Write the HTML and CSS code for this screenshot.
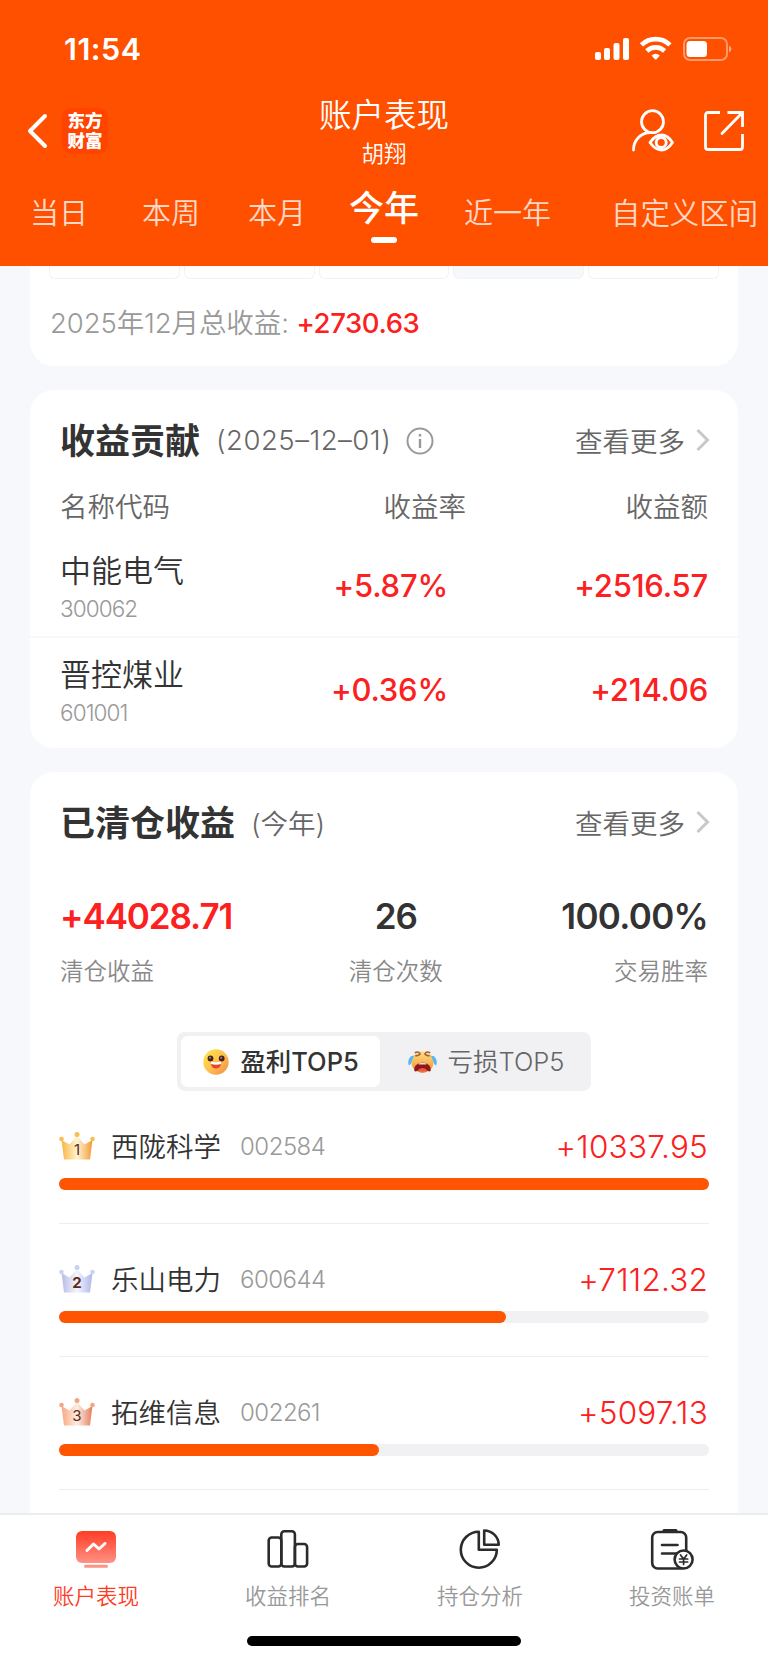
FILE: index.html
```html
<!DOCTYPE html>
<html lang="zh-CN">
<head>
  <meta charset="UTF-8">
  <title>账户表现</title>
  <link rel="stylesheet" href="styles.css">
</head>
<body>
  <header class="header">
    <div class="status-bar">
      <span class="time">11:54</span>
      <svg class="status-icons" width="138" height="26" viewBox="0 0 138 26">
        <g fill="#fff">
          <rect x="0" y="16" width="6" height="8" rx="2"/>
          <rect x="9" y="12" width="6" height="12" rx="2"/>
          <rect x="18.500" y="7" width="6" height="17" rx="2"/>
          <rect x="28" y="2" width="6" height="22" rx="2"/>
          <path d="M56.500 19.500l3.200 3.500a1.300 1.300 0 0 0 2 0l3.200-3.500q-4.200-3.600-8.400 0z"/>
        </g>
        <g fill="none" stroke="#fff" stroke-width="4.600">
          <path d="M46.400 8.900a20.500 20.500 0 0 1 28.600 0"/>
          <path d="M51.800 15a12.800 12.800 0 0 1 17.800 0"/>
        </g>
        <rect x="89" y="2" width="43" height="22" rx="6" fill="none" stroke="#fff" stroke-width="2" opacity=".42"/>
        <rect x="91.500" y="5" width="20.500" height="16" rx="3.500" fill="#fff"/>
        <path d="M134 9.500q5 3.500 0 7z" fill="#fff" opacity=".5"/>
      </svg>
    </div>
    <div class="nav">
      <div class="nav-left">
        <svg width="22" height="36" viewBox="0 0 22 36" fill="none" stroke="#fff" stroke-width="4" stroke-linecap="round" stroke-linejoin="round">
          <path d="M18 3L3 18l15 15"/>
        </svg>
        <div class="logo">东方<br>财富</div>
      </div>
      <div class="nav-title">
        <h1>账户表现</h1>
        <p>胡翔</p>
      </div>
      <div class="nav-right">
        <svg width="44" height="44" viewBox="0 0 44 44" fill="none" stroke="#fff" stroke-width="2.800" stroke-linecap="round">
          <circle cx="20.500" cy="12.700" r="11"/>
          <path d="M1.500 41c0-9.500 7-17.500 17-17.500"/>
          <path d="M18 33.500c7-10 16-10 22.500 0c-6.500 10-15.500 10-22.500 0z" stroke-linejoin="round"/>
          <circle cx="29.200" cy="33.500" r="5"/>
        </svg>
        <svg width="42" height="42" viewBox="0 0 42 42" fill="none" stroke="#fff" stroke-width="2.800">
          <path d="M17 2.500H5A2.500 2.500 0 0 0 2.500 5v32A2.500 2.500 0 0 0 5 39.500h32a2.500 2.500 0 0 0 2.500-2.500V24"/>
          <path d="M24.500 2.500h15v14.500"/>
          <path d="M39 3L19 23.500" stroke-linecap="round"/>
        </svg>
      </div>
    </div>
    <nav class="tabs">
      <span class="tab">当日</span>
      <span class="tab">本周</span>
      <span class="tab">本月</span>
      <span class="tab active">今年</span>
      <span class="tab">近一年</span>
      <span class="tab">自定义区间</span>
    </nav>
  </header>

  <main class="content">
    <section class="card month-card">
      <div class="cells">
        <i></i><i></i><i></i><i class="filled"></i><i></i>
      </div>
      <p class="month-total">2025年12月总收益: <b>+2730.63</b></p>
    </section>

    <section class="card contrib-card">
      <div class="card-head">
        <h2>收益贡献</h2>
        <span class="sub date">(2025–12–01)</span>
        <svg class="info" width="28" height="28" viewBox="0 0 28 28" fill="none" stroke="#999" stroke-width="2">
          <circle cx="14" cy="14" r="12.500"/>
          <path d="M14 12v9M14 7v2.500" stroke-width="2.400"/>
        </svg>
        <a class="more">查看更多
          <svg width="14" height="24" viewBox="0 0 14 24" fill="none" stroke="#c8c8c8" stroke-width="3"><path d="M1.500 2L11.500 12l-10 10"/></svg>
        </a>
      </div>
      <div class="row table-head">
        <span>名称代码</span><span class="rate">收益率</span><span>收益额</span>
      </div>
      <div class="row stock">
        <div><h3>中能电气</h3><p>300062</p></div>
        <span class="rate">+5.87%</span>
        <span>+2516.57</span>
      </div>
      <div class="row stock">
        <div><h3>晋控煤业</h3><p>601001</p></div>
        <span class="rate">+0.36%</span>
        <span>+214.06</span>
      </div>
    </section>

    <section class="card closed-card">
      <div class="card-head">
        <h2>已清仓收益</h2>
        <span class="sub">(今年)</span>
        <a class="more">查看更多
          <svg width="14" height="24" viewBox="0 0 14 24" fill="none" stroke="#c8c8c8" stroke-width="3"><path d="M1.500 2L11.500 12l-10 10"/></svg>
        </a>
      </div>
      <div class="stats">
        <div class="stat"><b class="red">+44028.71</b><span>清仓收益</span></div>
        <div class="stat count"><b>26</b><span>清仓次数</span></div>
        <div class="stat"><b>100.00%</b><span>交易胜率</span></div>
      </div>
      <div class="segment">
        <div class="seg on">
          <svg width="26" height="26" viewBox="0 0 26 26">
            <defs>
              <linearGradient id="face" x1="0" y1="0" x2="1" y2="1"><stop offset="0" stop-color="#ffe94a"/><stop offset=".5" stop-color="#ffc34d"/><stop offset="1" stop-color="#f08a4a"/></linearGradient>
            </defs>
            <circle cx="13" cy="13" r="12.700" fill="url(#face)"/>
            <circle cx="7.500" cy="9.500" r="2.900" fill="#4a2418"/><circle cx="18.700" cy="9.500" r="2.900" fill="#4a2418"/>
            <circle cx="7" cy="8.700" r="1" fill="#8d8ac0"/><circle cx="18.200" cy="8.700" r="1" fill="#8d8ac0"/>
            <path d="M8 12.500q5 1.500 10 0q.500 7-5 7t-5-7z" fill="#e8452f"/>
            <path d="M8 12.500q5 1.500 10 0v2.500q-5 1.600-10 0z" fill="#fff"/>
          </svg>
          <span>盈利TOP5</span>
        </div>
        <div class="seg">
          <svg width="29" height="26" viewBox="0 0 30 26">
            <defs>
              <linearGradient id="cry" x1="0" y1="0" x2="0" y2="1"><stop offset="0" stop-color="#ffdf85"/><stop offset=".6" stop-color="#f7b050"/><stop offset="1" stop-color="#e8702c"/></linearGradient>
            </defs>
            <ellipse cx="15" cy="13" rx="11.500" ry="11" fill="url(#cry)"/>
            <path d="M7 3.500q4-2 5.500 1q-1 2-5 2M23 3.500q-4-2-5.500 1q1 2 5 2" fill="none" stroke="#a0603a" stroke-width="1.600"/>
            <path d="M6.500 6.500Q2.500 6 1 10q-1.500 4 0 6.500q2.500-1 3-4.500q.500-3 2.500-5.500zM23.500 6.500q4-.500 5.500 3.500q1.500 4 0 6.500q-2.500-1-3-4.500q-.500-3-2.500-5.500z" fill="#57b4f5"/>
            <path d="M6.500 22c-1-11 18-11 17 0q-1.500 1.500-3 0q-5.500-2-11 0q-1.500 1.500-3 0z" fill="#8c1818"/>
            <path d="M11 14.500q4-1.200 8 0v1h-8z" fill="#f3d9d0"/>
            <path d="M10 21.500q5-4.500 10 0q-5 1.500-10 0z" fill="#ef5148"/>
          </svg>
          <span>亏损TOP5</span>
        </div>
      </div>

      <div class="rank">
        <div class="rank-line">
          <div class="crown gold">
            <svg width="36" height="28" viewBox="0 0 36 28">
              <defs><linearGradient id="gold"><stop offset="0" stop-color="#f9b53e"/><stop offset=".5" stop-color="#fff4d2"/><stop offset="1" stop-color="#f39a35"/></linearGradient></defs>
              <path d="M2.500 8l8 4.500L18 4l7.500 8.500 8-4.500L31 27.500H5z" fill="url(#gold)"/>
              <g fill="#f9bd52"><circle cx="2.500" cy="7" r="2.300"/><circle cx="18" cy="2.500" r="2.500"/><circle cx="33.500" cy="7" r="2.300"/></g>
            </svg>
            <em>1</em>
          </div>
          <h3>西陇科学</h3><span class="code">002584</span><span class="profit">+10337.95</span>
        </div>
        <div class="bar"><div class="fill" style="width:100%"></div></div>
      </div>
      <div class="rank">
        <div class="rank-line">
          <div class="crown silver">
            <svg width="36" height="28" viewBox="0 0 36 28">
              <defs><linearGradient id="silver"><stop offset="0" stop-color="#b7bde4"/><stop offset=".5" stop-color="#f4f5fc"/><stop offset="1" stop-color="#aeb7ea"/></linearGradient></defs>
              <path d="M2.500 8l8 4.500L18 4l7.500 8.500 8-4.500L31 27.500H5z" fill="url(#silver)"/>
              <g fill="#ccd1f1"><circle cx="2.500" cy="7" r="2.300"/><circle cx="18" cy="2.500" r="2.500"/><circle cx="33.500" cy="7" r="2.300"/></g>
            </svg>
            <em>2</em>
          </div>
          <h3>乐山电力</h3><span class="code">600644</span><span class="profit">+7112.32</span>
        </div>
        <div class="bar"><div class="fill" style="width:68.8%"></div></div>
      </div>
      <div class="rank">
        <div class="rank-line">
          <div class="crown bronze">
            <svg width="36" height="28" viewBox="0 0 36 28">
              <defs><linearGradient id="bronze"><stop offset="0" stop-color="#f8a77c"/><stop offset=".5" stop-color="#fdeee5"/><stop offset="1" stop-color="#e67e5c"/></linearGradient></defs>
              <path d="M2.500 8l8 4.500L18 4l7.500 8.500 8-4.500L31 27.500H5z" fill="url(#bronze)"/>
              <g fill="#f3a584"><circle cx="2.500" cy="7" r="2.300"/><circle cx="18" cy="2.500" r="2.500"/><circle cx="33.500" cy="7" r="2.300"/></g>
            </svg>
            <em>3</em>
          </div>
          <h3>拓维信息</h3><span class="code">002261</span><span class="profit">+5097.13</span>
        </div>
        <div class="bar"><div class="fill" style="width:49.3%"></div></div>
      </div>
    </section>
  </main>

  <footer class="tabbar">
    <div class="tabbar-items">
      <div class="item active">
        <svg width="44" height="44" viewBox="0 0 44 44">
          <defs><linearGradient id="screen" x1="0" y1="0" x2="0" y2="1"><stop offset="0" stop-color="#ff3b24"/><stop offset="1" stop-color="#ff9285"/></linearGradient></defs>
          <rect x="2" y="3" width="40" height="32" rx="6" fill="url(#screen)"/>
          <path d="M13 22.500l6.500-6.500 5.500 5 6-5.500" fill="none" stroke="#fff" stroke-width="3" stroke-linecap="round" stroke-linejoin="round"/>
          <rect x="10" y="36.700" width="24" height="3" rx="1.500" fill="#ff9285"/>
        </svg>
        <span>账户表现</span>
      </div>
      <div class="item">
        <svg width="44" height="44" viewBox="0 0 44 44" fill="none" stroke="#2b2b2b" stroke-width="2.600">
          <rect x="2.700" y="9.500" width="12.600" height="29" rx="3"/>
          <rect x="15.300" y="3.300" width="13.600" height="35.200" rx="3"/>
          <rect x="28.900" y="16" width="12.200" height="22.500" rx="3"/>
        </svg>
        <span>收益排名</span>
      </div>
      <div class="item">
        <svg width="44" height="44" viewBox="0 0 44 44" fill="none" stroke="#2b2b2b" stroke-width="2.600" stroke-linejoin="round">
          <path d="M20.800 3.700A18 18 0 1 0 38.800 21.700H20.800z"/>
          <path d="M26.200 2.500a14.500 14.500 0 0 1 14.500 14.300H26.200z"/>
        </svg>
        <span>持仓分析</span>
      </div>
      <div class="item">
        <svg width="44" height="44" viewBox="0 0 44 44" fill="none" stroke="#2b2b2b" stroke-width="2.600" stroke-linecap="round">
          <rect x="2.200" y="4" width="34" height="36.500" rx="5.500"/>
          <path d="M14 2.500h12" stroke-width="3"/>
          <path d="M12 17h15.500M12 25.500h15"/>
          <circle cx="33.600" cy="31.500" r="9" fill="#fff"/>
          <path d="M30.500 27l3.100 4 3.100-4M33.600 31v5.500M29.500 31h8.200M29.500 34h8.200" stroke-width="1.700"/>
        </svg>
        <span>投资账单</span>
      </div>
    </div>
    <div class="home-indicator"></div>
  </footer>
</body>
</html>
```
FILE: styles.css
```css
* {
  box-sizing: border-box;
  margin: 0;
  padding: 0;
}

body {
  width: 768px;
  height: 1663px;
  display: flex;
  flex-direction: column;
  overflow: hidden;
  background: #f6f8fb;
  color: #333;
  font-family: Inter, "Noto Sans CJK SC", sans-serif;
  font-weight: 350;
}

svg {
  display: block;
  flex: none;
}

.red {
  color: #fc2020;
}

/* header */
.header {
  height: 266px;
  flex: none;
  background: #ff5000;
  color: #fff;
}

.status-bar {
  height: 88px;
  padding: 10px 35px 0 64px;
  display: flex;
  justify-content: space-between;
  align-items: center;
}

.time {
  font-size: 30.5px;
  font-weight: 600;
  letter-spacing: .5px;
  padding-bottom: 2px;
}

.nav {
  height: 84px;
  padding-top: 2px;
  display: grid;
  grid-template-columns: 1fr 200px 1fr;
  align-items: center;
}

.nav-left {
  display: flex;
  align-items: center;
  gap: 13px;
  padding-left: 27px;
}

.logo {
  width: 46px;
  height: 46px;
  border-radius: 9px;
  background: #ff4400;
  font-size: 17.5px;
  font-weight: 900;
  line-height: 19.5px;
  padding-top: 3px;
  text-align: center;
}

.nav-title {
  text-align: center;
}

.nav-title h1 {
  font-size: 32.5px;
  line-height: 46px;
  font-weight: 350;
}

.nav-title p {
  font-size: 22.5px;
  line-height: 30px;
}

.nav-right {
  display: flex;
  align-items: center;
  justify-content: flex-end;
  gap: 27px;
  padding-right: 23px;
}

.tabs {
  height: 78px;
  display: flex;
  align-items: center;
  white-space: nowrap;
  padding-left: 30px;
}

.tab {
  font-size: 29px;
  color: rgba(255, 255, 255, .78);
  margin-right: 54px;
}

.tab:nth-child(2) {
  margin-right: 48px;
}

.tab:nth-child(3) {
  margin-right: 43px;
}

.tab.active {
  font-size: 35px;
  line-height: 50px;
  font-weight: 500;
  color: #fff;
  margin-right: 45px;
  display: flex;
  flex-direction: column;
  align-items: center;
  padding-top: 4px;
}

.tab.active::after {
  content: '';
  width: 26px;
  height: 6px;
  border-radius: 3px;
  background: #fff;
  margin-top: 4px;
}

.tab:nth-child(5) {
  margin-right: 60px;
}

.tab:last-child {
  font-size: 29.4px;
  margin-right: 0;
}

/* cards */
.content {
  flex: 1;
  min-height: 0;
  overflow: hidden;
  padding: 0 30px;
}

.card {
  background: #fff;
  border-radius: 24px;
  margin-bottom: 24px;
}

.month-card {
  height: 100px;
  border-radius: 0 0 24px 24px;
  padding: 0 19px;
}

.cells {
  display: grid;
  grid-template-columns: repeat(5, 1fr);
  gap: 4px;
}

.cells i {
  height: 13px;
  border: 1px solid #f2f3f5;
  border-top: 0;
  border-radius: 0 0 6px 6px;
}

.cells .filled {
  background: #f6f8fb;
}

.month-total {
  font-size: 27.5px;
  line-height: 40px;
  margin-top: 24px;
  padding-left: 1px;
  color: #999;
  letter-spacing: -.1px;
}

.month-total b {
  color: #fc2020;
  font-weight: 500;
  letter-spacing: -.4px;
}

.contrib-card {
  height: 358px;
}

.card-head {
  height: 102px;
  padding: 0 28px 0 30px;
  display: flex;
  align-items: center;
}

.card-head h2 {
  font-size: 35px;
  font-weight: 600;
  padding-bottom: 5px;
}

.sub {
  font-size: 27.5px;
  color: #666;
  margin-left: 16px;
  padding-bottom: 2px;
}

.date {
  letter-spacing: .5px;
}

.info {
  margin-left: 15px;
}

.more {
  margin-left: auto;
  padding-bottom: 2px;
  display: flex;
  align-items: center;
  gap: 11px;
  font-size: 27.5px;
  color: #666;
}

.row {
  display: grid;
  grid-template-columns: 230px 1fr 1fr;
  padding: 0 30px;
  align-items: center;
}

.row > span {
  text-align: right;
}

.table-head {
  height: 30px;
  font-size: 27.5px;
  line-height: 30px;
  color: #666;
}

.table-head > span:first-child {
  text-align: left;
}

.table-head .rate {
  padding-right: 33px;
}

.stock {
  height: 104px;
  margin-top: 12px;
  border-bottom: 2px solid #f8f8fa;
}

.stock + .stock {
  margin-top: 0;
  border: 0;
}

.stock > span {
  font-size: 31px;
  font-weight: 500;
  letter-spacing: -.2px;
  color: #fc2020;
}

.stock .rate {
  padding-right: 51px;
}

.stock > div {
  padding-top: 6px;
}

.stock + .stock > div {
  padding-top: 4px;
}

.stock + .stock > span {
  padding-bottom: 2px;
}

.stock h3 {
  font-size: 31px;
  line-height: 42px;
  font-weight: 350;
}

.stock p {
  font-size: 22.5px;
  line-height: 34px;
  letter-spacing: -.9px;
  color: #999;
}

.closed-card {
  height: 800px;
}

.stats {
  height: 158px;
  padding: 16px 30px 0;
  display: flex;
  justify-content: space-between;
}

.stat {
  display: flex;
  flex-direction: column;
  align-items: center;
}

.stat:first-child {
  align-items: flex-start;
}

.stat:last-child {
  align-items: flex-end;
}

.stat b {
  font-size: 35px;
  line-height: 52px;
  font-weight: 580;
  letter-spacing: -1.1px;
}

.stat:last-child b {
  letter-spacing: -.7px;
}

.count {
  margin-right: 2px;
}

.stat span {
  font-size: 23.5px;
  line-height: 34px;
  margin-top: 13px;
  color: #888;
}

.segment {
  width: 414px;
  height: 59px;
  margin: 0 auto;
  padding: 4px;
  border-radius: 8px;
  background: #f1f1f4;
  display: flex;
}

.seg {
  flex: 1;
  padding-left: 5px;
  display: flex;
  align-items: center;
  justify-content: center;
  gap: 11px;
  font-size: 25.5px;
  color: #666;
}

.seg span {
  padding-bottom: 4px;
}

.seg.on {
  flex: none;
  width: 199px;
  padding-left: 1px;
  border-radius: 7px;
  background: #fff;
  color: #333;
  font-weight: 500;
}

.rank {
  height: 133px;
  margin: 0 29px;
  padding-top: 32px;
  border-bottom: 1px solid #ededf0;
}

.rank-line {
  height: 46px;
  display: flex;
  align-items: center;
}

.crown {
  width: 36px;
  position: relative;
}

.crown em {
  position: absolute;
  left: 0;
  right: 0;
  top: 9px;
  text-align: center;
  font-style: normal;
  font-weight: 400;
  font-size: 15px;
  line-height: 18px;
  color: #5c2a1c;
}

.silver em {
  font-weight: 700;
}

.rank h3 {
  font-size: 27.5px;
  font-weight: 350;
  margin-left: 16px;
  padding-bottom: 2px;
}

.code {
  font-size: 24px;
  color: #999;
  letter-spacing: -.5px;
  margin-left: 19px;
}

.profit {
  margin-left: auto;
  font-size: 31.5px;
  letter-spacing: .2px;
  padding-right: 1px;
  color: #fc2020;
}

.bar {
  height: 12px;
  margin-top: 9px;
  border-radius: 6px;
  background: #f1f1f4;
}

.fill {
  height: 12px;
  border-radius: 6px;
  background: #ff5500;
}

/* bottom tabs */
.tabbar {
  height: 150px;
  flex: none;
  background: #fff;
  border-top: 2px solid #ededf0;
}

.tabbar-items {
  display: grid;
  grid-template-columns: repeat(4, 1fr);
}

.item {
  height: 121px;
  padding-top: 13px;
  display: flex;
  flex-direction: column;
  align-items: center;
  font-size: 21.5px;
  line-height: 32px;
  color: #999;
}

.item span {
  margin-top: 8px;
}

.item.active {
  color: #ff3b24;
}

.home-indicator {
  width: 274px;
  height: 10px;
  border-radius: 5px;
  background: #000;
  margin: 0 auto;
}
```
